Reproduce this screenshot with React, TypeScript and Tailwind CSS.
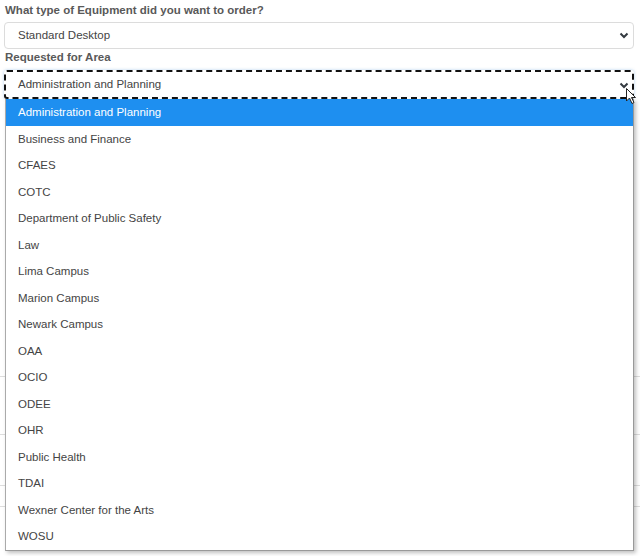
import React from 'react';

const areas = [
  'Administration and Planning',
  'Business and Finance',
  'CFAES',
  'COTC',
  'Department of Public Safety',
  'Law',
  'Lima Campus',
  'Marion Campus',
  'Newark Campus',
  'OAA',
  'OCIO',
  'ODEE',
  'OHR',
  'Public Health',
  'TDAI',
  'Wexner Center for the Arts',
  'WOSU',
];

const Chevron: React.FC = () => (
  <svg width="10" height="7" viewBox="0 0 10 7" className="shrink-0">
    <polyline points="1.5,1.5 5,5 8.5,1.5" fill="none" stroke="#343a40" strokeWidth="2" />
  </svg>
);

const App: React.FC = () => {
  return (
    <div className="relative w-[640px] h-[556px] overflow-hidden bg-white font-['Liberation_Sans',Arial,sans-serif]">
      <div className="px-[4px] pt-[2px]">
        <div className="h-[16px] leading-[16px] text-[11.5px] font-bold text-[#595959] pl-[1px] mb-[4px]">
          What type of Equipment did you want to order?
        </div>
        <div className="h-[27px] mr-[2px] flex items-center justify-between rounded-[4px] border border-[#dcdcdc] pl-[13px] pr-[4px] text-[11.5px] text-[#444]">
          <span>Standard Desktop</span>
          <Chevron />
        </div>
        <div className="h-[16px] leading-[16px] text-[11.5px] font-bold text-[#595959] pl-[1px] mb-[5px]">
          Requested for Area
        </div>
        <div className="h-[29px] mr-[2px] flex items-center justify-between rounded-[3px] border-2 border-dashed border-[#111] pl-[12px] pr-[3px] pt-[1px] text-[11.5px] text-[#444] shadow-[0_0_3px_rgba(100,160,220,0.5)]">
          <span>Administration and Planning</span>
          <Chevron />
        </div>
      </div>

      {/* form rows underneath the open list */}
      <div className="h-[278px] border-b border-[#ddd]" />
      <div className="h-[58px] border-b border-[#ddd]" />
      <div className="h-[51px] border-b border-[#ddd]" />
      <div className="h-[21px] border-b border-[#ddd]" />

      {/* open option list */}
      <div className="absolute left-[5px] top-[99px] w-[629px] bg-white border-l border-[#aaa] border-r border-b border-r-[#999] border-b-[#999] shadow-[2px_2px_4px_rgba(0,0,0,0.25)]">
        {areas.map((a, i) => (
          <div
            key={a}
            className={
              i === 0
                ? 'h-[26.5px] flex items-center pl-[12px] pt-[1px] text-[11.5px] bg-[#1e8ff0] text-white'
                : 'h-[26.5px] flex items-center pl-[12px] pt-[1px] text-[11.5px] text-[#444]'
            }
          >
            {a}
          </div>
        ))}
      </div>

      {/* mouse pointer */}
      <svg className="absolute left-[626px] top-[88px]" width="11" height="17" viewBox="0 0 11 17">
        <path d="M0.5 0.5 L0.5 13 L3.5 10 L6 15.5 L8 14.5 L5.5 9.5 L9.5 9.5 Z" fill="white" stroke="#222" strokeWidth="1" strokeLinejoin="round" />
      </svg>
    </div>
  );
};

export default App;
